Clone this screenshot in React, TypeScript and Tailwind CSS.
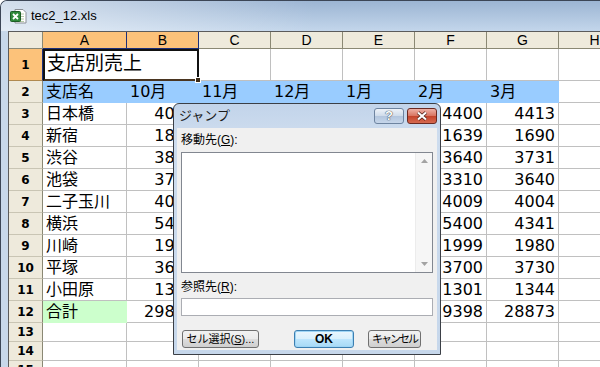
import React from "react";

const COLS = [
  { key: "A", w: 84 },
  { key: "B", w: 72 },
  { key: "C", w: 72 },
  { key: "D", w: 72 },
  { key: "E", w: 72 },
  { key: "F", w: 72 },
  { key: "G", w: 72 },
  { key: "H", w: 72 },
];

const months = ["10月", "11月", "12月", "1月", "2月", "3月"];

const branches: [string, number[]][] = [
  ["日本橋", [4080, 4105, 4230, 4188, 4400, 4413]],
  ["新宿", [1812, 1750, 1820, 1703, 1639, 1690]],
  ["渋谷", [3840, 3712, 3901, 3588, 3640, 3731]],
  ["池袋", [3725, 3610, 3805, 3402, 3310, 3640]],
  ["二子玉川", [4033, 3980, 4120, 3911, 4009, 4004]],
  ["横浜", [5412, 5290, 5530, 5188, 5400, 4341]],
  ["川崎", [1930, 1874, 2010, 1955, 1999, 1980]],
  ["平塚", [3650, 3588, 3720, 3610, 3700, 3730]],
  ["小田原", [1320, 1288, 1350, 1276, 1301, 1344]],
];

const totals = months.map((_, i) => branches.reduce((s, [, v]) => s + v[i], 0));

const RowHead = ({ n, h, active }: { n: number; h: string; active?: boolean }) => (
  <div
    className={`${h} w-[34px] shrink-0 flex justify-center border-r border-b text-[12px] font-bold ${
      active
        ? "bg-[#fcc27a] border-r-[#1c2f7a] border-b-[#b08a50] items-end pb-[6px]"
        : "bg-[#eeeadc] border-r-[#8a8874] border-b-[#c9c5b4] items-center"
    }`}
  >
    {n}
  </div>
);

const Cell = ({
  w,
  h,
  children,
  className = "border-[#c0c0c0]",
  right,
}: {
  w: number;
  h: string;
  children?: React.ReactNode;
  className?: string;
  right?: boolean;
}) => (
  <div
    style={{ width: w }}
    className={`${h} shrink-0 flex items-center border-r border-b whitespace-nowrap overflow-hidden ${
      right ? "justify-end pr-[3px]" : "pl-[3px]"
    } ${className}`}
  >
    {children}
  </div>
);

const Excel = () => (
  <svg width="17" height="16" viewBox="0 0 17 16">
    <path d="M5 1.5h8l3 3v10.5H5z" fill="#fff" stroke="#8a8f96" />
    <path d="M7 6h7M7 8.5h7M7 11h7M7 13.5h7" stroke="#b7c9a6" />
    <rect x="0.5" y="3.5" width="10" height="10" rx="1" fill="#2f8a3a" stroke="#1d5e26" />
    <path d="M3 6l5 5M8 6l-5 5" stroke="#fff" strokeWidth="1.8" />
  </svg>
);

const Arrow = ({ down }: { down?: boolean }) => (
  <svg width="7" height="4" viewBox="0 0 7 4">
    <path d={down ? "M0 0h7L3.5 4z" : "M0 4h7L3.5 0z"} fill="#a3a3a3" />
  </svg>
);

const btn =
  "h-[18px] rounded-[3px] border whitespace-nowrap leading-none flex items-center justify-center";

const Jump = () => (
  <div className="absolute left-[173px] top-[103px] w-[268px] h-[252px] rounded-t-[6px] border border-[#3b3f46] bg-[linear-gradient(to_bottom,#c2d4ea,#cddcee_30px,#c6d7eb)] flex flex-col font-['Liberation_Sans','Noto_Sans_CJK_JP',sans-serif] text-[12px] text-black">
    <div className="h-[24px] shrink-0 flex items-center pl-[5px] pr-[3px]">
      <span className="text-[13px] text-[#1b1b1b]">ジャンプ</span>
      <div className="ml-auto flex gap-[3px]">
        <div className="w-[30px] h-[16px] rounded-[3px] border border-[#6e84a0] bg-[linear-gradient(to_bottom,#eef3f9,#cfdbea_50%,#b3c6de_51%,#c6d6ea)] flex items-center justify-center text-[13px] font-bold text-white [text-shadow:0_0_1px_#2a3340,0_0_1px_#2a3340]">
          ?
        </div>
        <div className="w-[30px] h-[16px] rounded-[3px] border border-[#6b2a22] bg-[linear-gradient(to_bottom,#eeb1a6,#d8735f_50%,#c4432b_51%,#d66a50)] flex items-center justify-center">
          <svg width="14" height="10" viewBox="0 0 14 10">
            <path d="M3 1.5l8 7M11 1.5l-8 7" stroke="#4a1a12" strokeWidth="3.6" />
            <path d="M3 1.5l8 7M11 1.5l-8 7" stroke="#fff" strokeWidth="2.2" />
          </svg>
        </div>
      </div>
    </div>
    <div className="mx-[3px] h-[222px] bg-[#f0f0f0] px-[4px] pt-[4px] flex flex-col">
      <div className="h-[16px] leading-[16px]">
        移動先(<span className="underline">G</span>):
      </div>
      <div className="mt-[4px] h-[121px] border border-[#828790] bg-white flex justify-end">
        <div className="w-[17px] bg-[#f6f6f6] border-l border-[#ececec] flex flex-col items-center justify-between py-[6px]">
          <Arrow />
          <Arrow down />
        </div>
      </div>
      <div className="mt-[6px] h-[16px] leading-[16px]">
        参照先(<span className="underline">R</span>):
      </div>
      <div className="mt-[3px] h-[18px] border border-[#abadb3] bg-white" />
      <div className="mt-[14px] flex items-center">
        <div
          className={`${btn} ml-[1px] w-[77px] border-[#707070] bg-[linear-gradient(to_bottom,#f2f2f2,#ebebeb_50%,#dddddd_51%,#cfcfcf)] text-[11px]`}
        >
          セル選択(<span className="underline">S</span>)...
        </div>
        <div
          className={`${btn} ml-[35px] w-[60px] border-[#3c7fb1] bg-[linear-gradient(to_bottom,#eaf6fd,#d9f0fc_50%,#bee6fd_51%,#a7d9f5)] text-[12px] font-bold shadow-[inset_0_0_0_1px_#9fd5f5]`}
        >
          OK
        </div>
        <div
          className={`${btn} ml-[14px] w-[53px] border-[#707070] bg-[linear-gradient(to_bottom,#f2f2f2,#ebebeb_50%,#dddddd_51%,#cfcfcf)] text-[11px] tracking-[-2px]`}
        >
          キャンセル
        </div>
      </div>
    </div>
  </div>
);

export default function App() {
  return (
    <div className="relative w-[600px] h-[367px] overflow-hidden bg-white">
      <div className="w-[700px] h-[400px] rounded-tl-[7px] border-l border-t border-[#3c4656] bg-[#c8d8ea] flex flex-col">
        {/* title bar */}
        <div className="h-[30px] shrink-0 flex items-center pl-[9px] gap-[4px] rounded-tl-[6px] bg-[linear-gradient(to_right,rgba(255,255,255,0.55),rgba(255,255,255,0)_45%),linear-gradient(to_bottom,#9cb5d3,#c3d6eb)]">
          <Excel />
          <span className="font-['Liberation_Sans',sans-serif] text-[13px] text-black">tec2_12.xls</span>
        </div>

        <div className="flex flex-1">
          <div className="w-[7px] shrink-0" />
          {/* sheet */}
          <div className="flex-1 border-l border-t border-[#5b5b5b] bg-white font-['DejaVu_Sans','Noto_Sans_CJK_JP',sans-serif] text-[16px] text-black">
            {/* column headers */}
            <div className="flex h-[17px]">
              <div className="w-[34px] shrink-0 bg-[#eeeadc] border-r border-b border-[#8a8874]" />
              {COLS.map((c, i) => (
                <div
                  key={c.key}
                  style={{ width: c.w }}
                  className={`shrink-0 flex items-center justify-center border-r border-b font-['Liberation_Sans',sans-serif] text-[14px] ${
                    i < 2
                      ? "bg-[#fcc27a] border-r-[#1c2f7a] border-b-[#1c2f7a]"
                      : "bg-[#eeeadc] border-[#8a8874]"
                  }`}
                >
                  {c.key}
                </div>
              ))}
            </div>

            {/* row 1 */}
            <div className="flex">
              <RowHead n={1} h="h-[32px]" active />
              <div className="relative w-[156px] h-[32px] shrink-0 border-2 border-[#111] border-b-[#4a3520] flex items-end pl-[2px] pb-[2px] text-[19px]">
                支店別売上
                <div className="absolute -right-[4px] -bottom-[4px] w-[6px] h-[6px] bg-[#3a2a18] border border-white" />
              </div>
              {COLS.slice(2).map((c) => (
                <Cell key={c.key} w={c.w} h="h-[32px]" />
              ))}
            </div>

            {/* row 2 */}
            <div className="flex">
              <RowHead n={2} h="h-[22px]" />
              <Cell w={84} h="h-[22px]" className="bg-[#99ccff] border-[#99ccff]">
                支店名
              </Cell>
              {months.map((m, i) => (
                <Cell key={m} w={COLS[i + 1].w} h="h-[22px]" className="bg-[#99ccff] border-[#99ccff]">
                  {m}
                </Cell>
              ))}
              <Cell w={72} h="h-[22px]" />
            </div>

            {/* data rows */}
            {branches.map(([name, vals], r) => (
              <div key={name} className="flex">
                <RowHead n={r + 3} h="h-[22px]" />
                <Cell w={84} h="h-[22px]">
                  {name}
                </Cell>
                {vals.map((v, i) => (
                  <Cell key={i} w={COLS[i + 1].w} h="h-[22px]" right>
                    {v}
                  </Cell>
                ))}
                <Cell w={72} h="h-[22px]" />
              </div>
            ))}

            {/* total row */}
            <div className="flex">
              <RowHead n={12} h="h-[22px]" />
              <Cell w={84} h="h-[22px]" className="bg-[#ccffcc] border-[#ccffcc]">
                合計
              </Cell>
              {totals.map((v, i) => (
                <Cell key={i} w={COLS[i + 1].w} h="h-[22px]" right>
                  {v}
                </Cell>
              ))}
              <Cell w={72} h="h-[22px]" />
            </div>

            {[13, 14, 15].map((n) => (
              <div key={n} className="flex">
                <RowHead n={n} h="h-[19px]" />
                {COLS.map((c) => (
                  <Cell key={c.key} w={c.w} h="h-[19px]" />
                ))}
              </div>
            ))}
          </div>
        </div>
      </div>

      <Jump />
    </div>
  );
}
